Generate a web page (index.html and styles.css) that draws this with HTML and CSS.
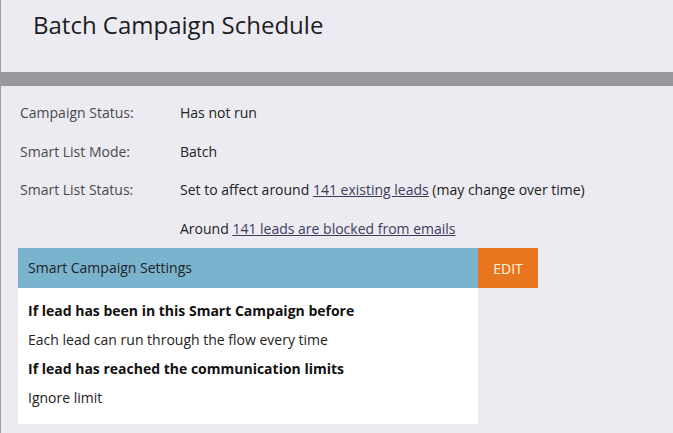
FILE: index.html
```html
<!DOCTYPE html>
<html>
<head>
<meta charset="utf-8">
<link rel="stylesheet" href="styles.css">
</head>
<body>
<div class="page">
  <header class="top">
    <h1 class="title">Batch Campaign Schedule</h1>
  </header>
  <div class="divider"></div>
  <section class="info">
    <div class="row"><span class="label">Campaign Status:</span><span class="value">Has not run</span></div>
    <div class="row"><span class="label">Smart List Mode:</span><span class="value">Batch</span></div>
    <div class="row"><span class="label">Smart List Status:</span><span class="value">Set to affect around <a class="link">141 existing leads</a> (may change over time)</span></div>
    <div class="row"><span class="label"></span><span class="value">Around <a class="link">141 leads are blocked from emails</a></span></div>
  </section>
  <section class="panel">
    <div class="panel-head">
      <div class="panel-title">Smart Campaign Settings</div>
      <button class="edit">EDIT</button>
    </div>
    <div class="panel-body">
      <div class="line bold">If lead has been in this Smart Campaign before</div>
      <div class="line">Each lead can run through the flow every time</div>
      <div class="line bold">If lead has reached the communication limits</div>
      <div class="line">Ignore limit</div>
    </div>
  </section>
</div>
</body>
</html>
```
FILE: styles.css
```css
html, body {
  margin: 0;
  padding: 0;
  background: #ecebf1;
}
body {
  font-family: "Open Sans", "Liberation Sans", sans-serif;
  color: #222;
}
.page {
  width: 673px;
  height: 433px;
  border-left: 1px solid #9a999e;
  box-sizing: border-box;
  overflow: hidden;
}
.top {
  height: 72px;
  box-sizing: border-box;
  padding: 9px 0 0 32px;
}
.title {
  margin: 0;
  font-size: 24px;
  font-weight: 400;
  line-height: 32px;
  color: #1d1d1f;
}
.divider {
  height: 14px;
  background: #98979c;
}
.info {
  padding: 17px 0 0 19px;
}
.row {
  display: flex;
  height: 38.5px;
  align-items: flex-start;
  font-size: 14px;
  line-height: 20px;
}
.label {
  width: 160px;
  color: #4a4a4a;
}
.value {
  color: #222;
}
.link {
  color: #3f3c5c;
  text-decoration: underline;
}
.panel {
  margin: -9px 0 0 17px;
  width: 520px;
}
.panel-head {
  display: flex;
  height: 40px;
}
.panel-title {
  width: 460px;
  background: #7ab3ce;
  font-size: 14px;
  line-height: 40px;
  padding-left: 10px;
  box-sizing: border-box;
  color: #222;
}
.edit {
  width: 60px;
  border: 0;
  margin: 0;
  padding: 0;
  background: #e8761e;
  color: #fff6e0;
  font-family: "Open Sans", "Liberation Sans", sans-serif;
  font-size: 14px;
}
.panel-body {
  width: 460px;
  background: #fff;
  box-sizing: border-box;
  padding: 8px 10px 13px;
  height: 136px;
}
.line {
  font-size: 14px;
  line-height: 29px;
  color: #222;
}
.bold {
  font-weight: 700;
  color: #111;
}
```
